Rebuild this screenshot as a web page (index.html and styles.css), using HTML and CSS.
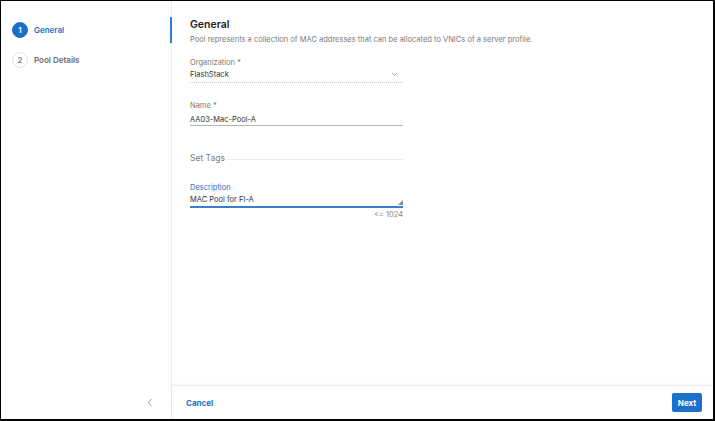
FILE: index.html
```html
<!DOCTYPE html>
<html>
<head>
<meta charset="utf-8">
<link rel="stylesheet" href="styles.css">
</head>
<body>
<div class="frame">
  <aside class="sidebar">
    <div class="steps">
      <div class="step active">
        <span class="num">1</span><span class="step-label">General</span>
        <span class="indicator"></span>
      </div>
      <div class="step">
        <span class="num">2</span><span class="step-label">Pool Details</span>
      </div>
    </div>
    <div class="collapse">
      <svg width="6" height="9" viewBox="0 0 6 9"><path d="M4.5 1 L1.5 4.5 L4.5 8" fill="none" stroke="#9a9a9a" stroke-width="1"/></svg>
    </div>
  </aside>
  <main class="main">
    <section class="content">
      <h1 class="title">General</h1>
      <p class="desc">Pool represents a collection of MAC addresses that can be allocated to VNICs of a server profile.</p>

      <div class="field org">
        <div class="label">Organization *</div>
        <div class="value select">
          <span>FlashStack</span>
          <svg width="7" height="5" viewBox="0 0 7 5"><path d="M1 1 L3.5 3.5 L6 1" fill="none" stroke="#999" stroke-width="0.8"/></svg>
        </div>
      </div>

      <div class="field name">
        <div class="label">Name *</div>
        <div class="value input">AA03-Mac-Pool-A</div>
      </div>

      <div class="tags">
        <span>Set Tags</span><span class="tags-line"></span>
      </div>

      <div class="field focus">
        <div class="label">Description</div>
        <div class="value textarea">
          <span>MAC Pool for FI-A</span>
          <svg class="grip" width="5" height="5" viewBox="0 0 5 5"><path d="M5 0 L5 5 L0 5 Z" fill="#8a8a8a"/></svg>
        </div>
        <div class="counter">&lt;= 1024</div>
      </div>
    </section>
    <footer class="footer">
      <button class="cancel">Cancel</button>
      <button class="next">Next</button>
    </footer>
  </main>
</div>
</body>
</html>
```
FILE: styles.css
```css
* { box-sizing: border-box; }
html, body { margin: 0; padding: 0; height: 100%; }
body {
  font-family: Inter, "Noto Sans", Arial, sans-serif;
  background: #000;
}
.frame {
  display: flex;
  height: 421px;
  width: 715px;
  border-style: solid;
  border-color: #000;
  border-width: 1px 2px 2px 1px;
  background: #fff;
}
.sidebar {
  width: 171px;
  flex: none;
  border-right: 1px solid #ececec;
  display: flex;
  flex-direction: column;
  justify-content: space-between;
}
.steps { padding-top: 14px; }
.step {
  position: relative;
  display: flex;
  align-items: center;
  height: 30px;
  padding-left: 11px;
  font-size: 8px;
  font-weight: 600;
  color: #6b6b6b;
}
.num {
  width: 16px; height: 16px;
  border-radius: 50%;
  border: 1px solid #e2e2e2;
  display: flex; align-items: center; justify-content: center;
  font-size: 8px;
  font-weight: 600;
  color: #777;
  margin-right: 6px;
}
.step.active { color: #1a73c9; }
.step.active .num { background: #1a6fc9; border-color: #1a6fc9; color: #fff; }
.indicator {
  position: absolute;
  right: -1px;
  top: 2px;
  width: 2px;
  height: 26px;
  background: #2b7ed6;
}
.collapse {
  height: 34px;
  display: flex;
  align-items: center;
  justify-content: flex-end;
  padding-right: 18px;
}
.main {
  flex: 1;
  display: flex;
  flex-direction: column;
  min-width: 0;
}
.content {
  flex: 1;
  padding: 17px 0 0 18px;
}
.title {
  margin: 0;
  font-size: 10.5px;
  line-height: 14px;
  font-weight: 600;
  color: #222;
}
.desc {
  margin: 2px 0 0;
  font-size: 7.5px;
  line-height: 12px;
  color: #7a7a7a;
}
.field { width: 213px; }
.label {
  font-size: 7.5px;
  line-height: 11px;
  color: #7a7a7a;
}
.value {
  font-size: 7.5px;
  line-height: 11px;
  color: #333;
  height: 14px;
  margin-top: 1px;
  display: flex;
  align-items: flex-start;
  justify-content: space-between;
}
.field.org { margin-top: 11px; }
.select { border-bottom: 1px dotted #c4c4c4; padding-right: 5px; }
.select svg { margin-top: 3px; }
.field.name { margin-top: 17px; }
.input { border-bottom: 1px solid #b5b5b5; margin-top: 3px; height: 12px; }
.tags {
  width: 213px;
  margin-top: 27px;
  display: flex;
  align-items: center;
  font-size: 8.5px;
  color: #7a7a7a;
}
.tags-line { flex: 1; height: 1px; background: #ececec; margin-left: 3px; margin-top: 2px; }
.field.focus { margin-top: 19px; }
.focus .label { color: #2272c8; }
.textarea { border-bottom: 2px solid #3a7fcf; position: relative; height: 14px; }
.grip { position: absolute; right: 0; bottom: 1px; }
.counter {
  text-align: right;
  font-size: 7.5px;
  line-height: 12px;
  color: #888;
  margin-top: 1px;
}
.footer {
  height: 34px;
  flex: none;
  border-top: 1px solid #f0f0f0;
  box-shadow: 0 -1px 2px rgba(0,0,0,0.04);
  display: flex;
  align-items: center;
  justify-content: space-between;
  padding: 0 11px 0 14px;
}
button {
  font-family: inherit;
  border: none;
  cursor: pointer;
}
.cancel {
  background: none;
  color: #1a6fc9;
  font-size: 8px;
  font-weight: 700;
  padding: 0;
}
.next {
  background: #1b72cc;
  color: #fff;
  font-size: 8px;
  font-weight: 700;
  width: 30px;
  height: 19px;
  border-radius: 2px;
  padding: 0;
}
```
